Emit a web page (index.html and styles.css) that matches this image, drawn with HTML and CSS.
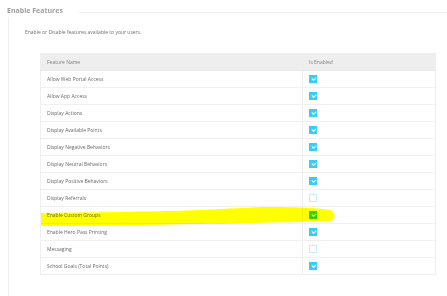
FILE: index.html
```html
<!DOCTYPE html>
<html>
<head>
	<title>Enable Features</title>
	<meta charset="utf-8">
	<link rel="stylesheet" href="styles.css">
</head>
<body>
	<div class="page">
		<div class="section_head">
			<h2 class="section_title">Enable Features</h2>
			<div class="section_line"></div>
		</div>

		<div class="section_body">
			<p class="intro">Enable or Disable features available to your users.</p>

			<table class="feature_table">
				<tr>
					<th class="name_col">Feature Name</th>
					<th>Is Enabled</th>
				</tr>
				<tr><td>Allow Web Portal Access</td><td><span class="check on"></span></td></tr>
				<tr><td>Allow App Access</td><td><span class="check on"></span></td></tr>
				<tr><td>Display Actions</td><td><span class="check on"></span></td></tr>
				<tr><td>Display Available Points</td><td><span class="check on"></span></td></tr>
				<tr><td>Display Negative Behaviors</td><td><span class="check on"></span></td></tr>
				<tr><td>Display Neutral Behaviors</td><td><span class="check on"></span></td></tr>
				<tr><td>Display Positive Behaviors</td><td><span class="check on"></span></td></tr>
				<tr><td>Display Referrals</td><td><span class="check"></span></td></tr>
				<tr><td>Enable Custom Groups</td><td><span class="check on"></span></td></tr>
				<tr><td>Enable Hero Pass Printing</td><td><span class="check on"></span></td></tr>
				<tr><td>Messaging</td><td><span class="check"></span></td></tr>
				<tr><td>School Goals (Total Points)</td><td><span class="check on"></span></td></tr>
			</table>
		</div>

		<!-- highlighter mark drawn over the page -->
		<svg class="marker" width="447" height="296" viewBox="0 0 447 296">
			<path d="M41 213 C90 212 150 212 200 210 C230 209 250 207 270 207 C295 207 320 208 330 210 C336 212 336 220 330 221 C300 222 250 223 200 224 C150 225 90 226 41 226 Z" fill="#ffff00"/>
		</svg>
	</div>
</body>
</html>
```

FILE: styles.css
```css
* {
	margin: 0px;
	padding: 0px;
	box-sizing: border-box;
}
body {
	background-color: white;
	font-family: "Open Sans", "Liberation Sans", sans-serif;
	color: #666666;
}
.page {
	position: relative;
	width: 447px;
	height: 296px;
	overflow: hidden;
}
.section_head {
	display: flex;
	align-items: center;
	gap: 16px;
	padding: 5px 0px 0px 7px;
	height: 17px;
}
.section_title {
	font-size: 7px;
	font-weight: bold;
	color: #a0a0a0;
	line-height: 12px;
}
.section_line {
	flex: 1;
	border-top: 1px solid #f0f0f0;
	margin-top: 2px;
}
.section_body {
	margin-left: 8px;
	border-left: 1px solid #f0f0f0;
	padding: 12px 0px 0px 16px;
	height: 279px;
}
.intro {
	font-size: 5px;
	line-height: 7px;
	color: #707070;
}
.feature_table {
	margin-top: 17px;
	margin-left: 15px;
	width: 396px;
	border-collapse: collapse;
	border: 1px solid #efefef;
	font-size: 5px;
}
th, td {
	height: 17px;
	text-align: left;
	padding: 0px 0px 0px 6px;
	border-bottom: 1px solid #f0f0f0;
	vertical-align: middle;
}
th {
	background-color: #eeeeee;
	font-weight: normal;
	color: #808080;
	border-bottom: 1px solid #e9e9e9;
}
td {
	color: #6a6a6a;
}
.name_col {
	width: 262px;
}
th + th, td + td {
	border-left: 1px solid #ededed;
}
.check {
	display: block;
	width: 8px;
	height: 8px;
	border: 1px solid #c4eefa;
	background-color: white;
	position: relative;
}
.check.on {
	background-color: #36cdf6;
	border-color: #36cdf6;
}
.check.on::after {
	content: "";
	position: absolute;
	left: 2px;
	top: 1px;
	width: 3px;
	height: 2px;
	border-left: 1px solid white;
	border-bottom: 1px solid white;
	transform: rotate(-40deg);
}
.marker {
	position: absolute;
	left: 0px;
	top: 0px;
	mix-blend-mode: multiply;
	pointer-events: none;
}
```
